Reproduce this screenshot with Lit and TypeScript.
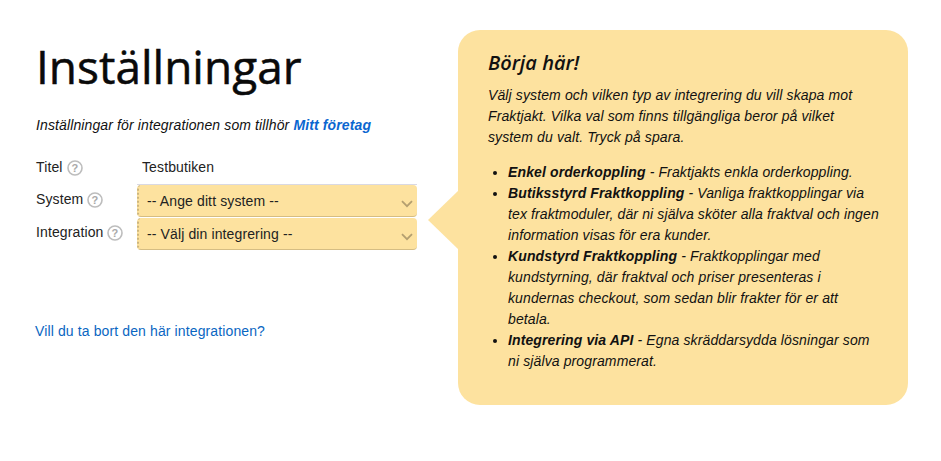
import { LitElement, html, css, svg } from "lit";
import { customElement } from "lit/decorators.js";

const help = html`<svg class="help" viewBox="0 0 16 16" width="16" height="16" aria-hidden="true">
  <circle cx="8" cy="8" r="7" fill="none" stroke="#bdbdbd" stroke-width="1.6"></circle>
  <text x="8" y="12" text-anchor="middle" font-family="Liberation Sans" font-weight="700" font-size="11" fill="#a9a9a9">?</text>
</svg>`;

const chev = svg`<svg class="chev" viewBox="0 0 12 8" width="12" height="8" aria-hidden="true"><path d="M1 1.2 L6 6.2 L11 1.2" fill="none" stroke="#b49f70" stroke-width="1.8"/></svg>`;

@customElement("app-root")
export class AppRoot extends LitElement {
  static styles = css`
    :host { display: block; width: 941px; height: 461px; background: #fff; font-family: "Liberation Sans", Arial, sans-serif; color: #111; overflow: hidden; letter-spacing: 0.12px; }
    .page { display: flex; align-items: flex-start; padding: 30px 33px 0 36px; gap: 41px; }
    .left { width: 381px; flex: none; }
    h1 { margin: 0; font: 400 46px/72px "Open Sans", sans-serif; -webkit-text-stroke: 0.5px #0a0a0a; letter-spacing: 0; color: #0a0a0a; height: 72px; }
    .sub { margin: 13px 0 0; font-size: 14px; line-height: 20px; font-style: italic; color: #111; }
    .sub b { color: #0a66d0; font-weight: 700; }
    .form { margin-top: 17px; display: grid; grid-template-columns: 101px 280px; }
    .lab { font-size: 14px; display: flex; align-items: flex-start; gap: 4px; color: #222; }
    .lab span { line-height: 20px; }
    .help { margin-top: 3px; flex: none; }
    .lab.t { padding-top: 5px; }
    .lab.s { padding-top: 4px; }
    .title { font-size: 14px; line-height: 20px; height: 33px; padding: 5px 0 0 5px; box-sizing: border-box; border-bottom: 1px solid #d9d9e3; color: #222; }
    .sel { height: 32px; box-sizing: border-box; background: #fde29f; border-radius: 4px; border-bottom: 1px solid #d5bd83; border-left: 2px dotted #cdb67e; display: flex; align-items: center; justify-content: space-between; padding: 0 4px 0 8px; font-size: 14px; color: #222; margin-bottom: 1px; }
    .chev { margin-top: 6px; }
    .del { margin: 70px 0 0 -1px; }
    .del a { font-size: 14px; line-height: 20px; color: #0a66c2; text-decoration: none; }
    .panel { position: relative; flex: none; width: 450px; height: 375px; box-sizing: border-box; background: #fde29f; border-radius: 22px; padding: 18px 26px 0 30px; font-size: 14px; font-style: italic; color: #111; }
    .panel::before { content: ""; position: absolute; left: -30px; top: 161px; border: 29px solid transparent; border-left: 0; border-right: 30px solid #fde29f; }
    h2 { margin: 0; font: italic 600 20px/30px "Open Sans", sans-serif; letter-spacing: 0; color: #111; }
    .panel p { margin: 7px 0 0; line-height: 21px; }
    ul { margin: 14px 0 0; padding: 0 0 0 20px; line-height: 21px; }
    li b { font-weight: 700; }
  `;

  render() {
    return html`<div class="page">
      <div class="left">
        <h1>Inställningar</h1>
        <p class="sub">Inställningar för integrationen som tillhör <b>Mitt företag</b></p>
        <div class="form">
          <div class="lab t"><span>Titel</span>${help}</div>
          <div class="title">Testbutiken</div>
          <div class="lab s"><span>System</span>${help}</div>
          <div class="sel"><span>-- Ange ditt system --</span>${chev}</div>
          <div class="lab s"><span>Integration</span>${help}</div>
          <div class="sel"><span>-- Välj din integrering --</span>${chev}</div>
        </div>
        <p class="del"><a href="#">Vill du ta bort den här integrationen?</a></p>
      </div>
      <aside class="panel">
        <h2>Börja här!</h2>
        <p>Välj system och vilken typ av integrering du vill skapa mot Fraktjakt. Vilka val som finns tillgängliga beror på vilket system du valt. Tryck på spara.</p>
        <ul>
          <li><b>Enkel orderkoppling</b> - Fraktjakts enkla orderkoppling.</li>
          <li><b>Butiksstyrd Fraktkoppling</b> - Vanliga fraktkopplingar via tex fraktmoduler, där ni själva sköter alla fraktval och ingen information visas för era kunder.</li>
          <li><b>Kundstyrd Fraktkoppling</b> - Fraktkopplingar med kundstyrning, där fraktval och priser presenteras i kundernas checkout, som sedan blir frakter för er att betala.</li>
          <li><b>Integrering via API</b> - Egna skräddarsydda lösningar som ni själva programmerat.</li>
        </ul>
      </aside>
    </div>`;
  }
}
